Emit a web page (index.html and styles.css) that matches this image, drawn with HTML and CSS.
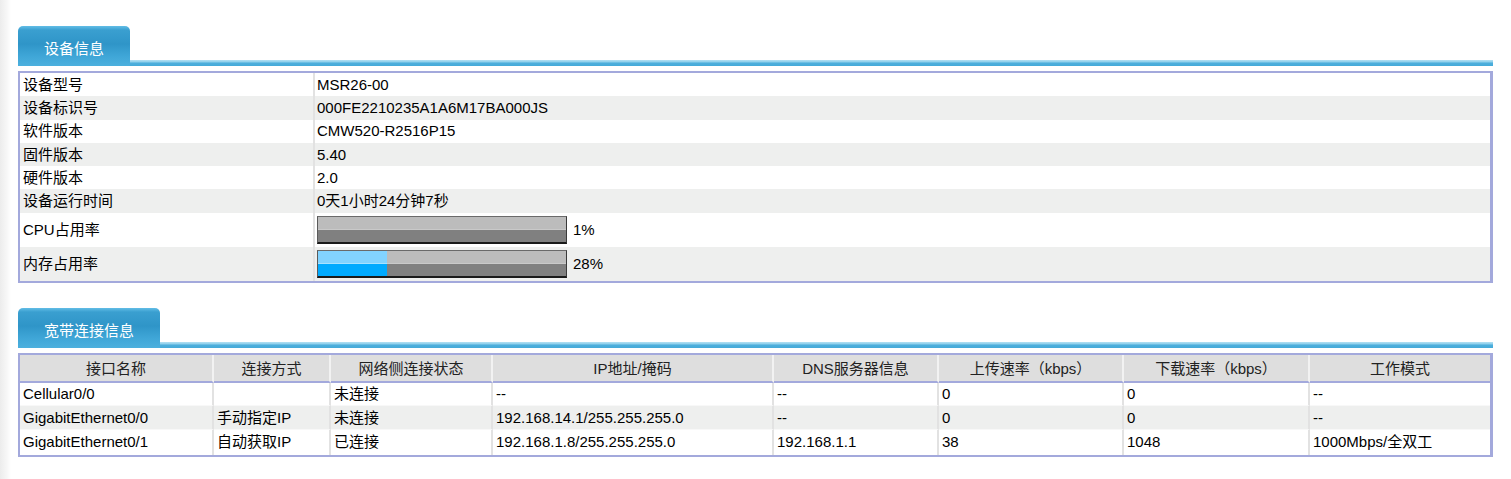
FILE: index.html
```html
<!DOCTYPE html>
<html lang="zh-CN">

<head>
    <meta charset="UTF-8">
    <meta name="viewport" content="width=device-width, initial-scale=1.0">
    <title>设备概览</title>
    <link rel="stylesheet" href="styles.css">
</head>

<body>
    <div class="page">
        <div class="section">
            <div class="tab-bar">
                <div class="tab">设备信息</div>
                <div class="tab-line"></div>
            </div>
            <table class="info-table">
                <tr>
                    <td class="label">设备型号</td>
                    <td>MSR26-00</td>
                </tr>
                <tr class="alt">
                    <td class="label">设备标识号</td>
                    <td>000FE2210235A1A6M17BA000JS</td>
                </tr>
                <tr>
                    <td class="label">软件版本</td>
                    <td>CMW520-R2516P15</td>
                </tr>
                <tr class="alt">
                    <td class="label">固件版本</td>
                    <td>5.40</td>
                </tr>
                <tr>
                    <td class="label">硬件版本</td>
                    <td>2.0</td>
                </tr>
                <tr class="alt">
                    <td class="label">设备运行时间</td>
                    <td>0天1小时24分钟7秒</td>
                </tr>
                <tr class="bar-row">
                    <td class="label">CPU占用率</td>
                    <td>
                        <div class="usage">
                            <div class="bar"><div class="bar-fill" style="width: 0%"></div></div>
                            <span class="usage-text">1%</span>
                        </div>
                    </td>
                </tr>
                <tr class="bar-row alt">
                    <td class="label">内存占用率</td>
                    <td>
                        <div class="usage">
                            <div class="bar"><div class="bar-fill" style="width: 28%"></div></div>
                            <span class="usage-text">28%</span>
                        </div>
                    </td>
                </tr>
            </table>
        </div>

        <div class="section">
            <div class="tab-bar">
                <div class="tab tab-wide">宽带连接信息</div>
                <div class="tab-line"></div>
            </div>
            <table class="wan-table">
                <colgroup>
                    <col class="c-name">
                    <col class="c-type">
                    <col class="c-state">
                    <col class="c-ip">
                    <col class="c-dns">
                    <col class="c-up">
                    <col class="c-down">
                    <col class="c-mode">
                </colgroup>
                <thead>
                    <tr>
                        <th>接口名称</th>
                        <th>连接方式</th>
                        <th>网络侧连接状态</th>
                        <th>IP地址/掩码</th>
                        <th>DNS服务器信息</th>
                        <th>上传速率（kbps）</th>
                        <th>下载速率（kbps）</th>
                        <th class="last">工作模式</th>
                    </tr>
                </thead>
                <tbody>
                    <tr>
                        <td>Cellular0/0</td>
                        <td></td>
                        <td>未连接</td>
                        <td>--</td>
                        <td>--</td>
                        <td>0</td>
                        <td>0</td>
                        <td class="last">--</td>
                    </tr>
                    <tr class="alt">
                        <td>GigabitEthernet0/0</td>
                        <td>手动指定IP</td>
                        <td>未连接</td>
                        <td>192.168.14.1/255.255.255.0</td>
                        <td>--</td>
                        <td>0</td>
                        <td>0</td>
                        <td class="last">--</td>
                    </tr>
                    <tr>
                        <td>GigabitEthernet0/1</td>
                        <td>自动获取IP</td>
                        <td>已连接</td>
                        <td>192.168.1.8/255.255.255.0</td>
                        <td>192.168.1.1</td>
                        <td>38</td>
                        <td>1048</td>
                        <td class="last">1000Mbps/全双工</td>
                    </tr>
                </tbody>
            </table>
        </div>
    </div>
</body>

</html>
```

FILE: styles.css
```css
html,
body {
    margin: 0;
    padding: 0;
}

body {
    font-family: "Liberation Sans", Arial, "Noto Sans CJK SC", sans-serif;
    font-size: 15px;
    color: #000;
    background: linear-gradient(to right, #ececec 0, #f7f7f7 7px, #fff 11px) no-repeat;
    background-color: #fff;
    min-height: 479px;
}

.page {
    padding: 26px 18px 0 18px;
}

.section {
    margin-bottom: 25px;
}

/* tab header */
.tab-bar {
    display: flex;
    align-items: flex-end;
    height: 40px;
    margin-bottom: 5px;
}

.tab {
    width: 112px;
    height: 40px;
    box-sizing: border-box;
    padding-top: 12px;
    line-height: 22px;
    text-align: center;
    color: #fff;
    font-size: 15px;
    border-radius: 5px 5px 0 0;
    background: linear-gradient(to bottom, #62bde6 0, #3a9fd0 4px, #2f95c8 45%, #3fa6d7 75%, #4cb0de 100%);
}

.tab-wide {
    width: 142px;
}

.tab-line {
    flex: 1;
    height: 6px;
    background: linear-gradient(to bottom, #b4e0f2 0, #8ccfec 33%, #4eafdc 50%, #44aad9 100%);
}

/* device info table */
.info-table {
    width: 100%;
    border-collapse: separate;
    border-spacing: 0;
    border: 2px solid #a3a9dc;
    border-right-width: 3px;
}

.info-table td {
    height: 23.3px;
    padding: 0 0 0 2px;
    box-sizing: border-box;
    line-height: 22px;
    white-space: nowrap;
}

.info-table td.label {
    width: 295px;
    padding-left: 3px;
    border-right: 2px solid #e2e2e2;
}

.info-table tr.alt td {
    background-color: #eeefee;
}

.info-table tr.bar-row td {
    height: 34px;
}

.usage {
    display: flex;
    align-items: center;
}

.bar {
    width: 250px;
    height: 28px;
    box-sizing: border-box;
    border-top: 1px solid #6a6a6a;
    border-left: 1px solid #5a5a5a;
    border-right: 1px solid #3a3a3a;
    border-bottom: 2px solid #1a1a1a;
    background: linear-gradient(to bottom, #bcbcbc 0, #bcbcbc 48%, #c9c9c9 48%, #c9c9c9 52%, #808080 52%, #808080 100%);
}

.bar-fill {
    height: 100%;
    background: linear-gradient(to bottom, #82d3ff 0, #82d3ff 48%, #a8e2ff 48%, #a8e2ff 52%, #00aaff 52%, #00aaff 100%);
}

.usage-text {
    margin-left: 6px;
}

/* wan table */
.wan-table {
    width: 100%;
    table-layout: fixed;
    border-collapse: separate;
    border-spacing: 0;
    border: 2px solid #a3a9dc;
    border-right-width: 3px;
}

.c-name { width: 194px; }
.c-type { width: 117px; }
.c-state { width: 162px; }
.c-ip { width: 281px; }
.c-dns { width: 165px; }
.c-up { width: 185px; }
.c-down { width: 186px; }
.c-mode { width: auto; }

.wan-table th {
    height: 28px;
    padding: 0;
    font-weight: normal;
    color: #222;
    background-color: #dedede;
    border-right: 2px solid #f2f2f2;
    border-bottom: 2px solid #a3a9dc;
    text-align: center;
    box-sizing: border-box;
}

.wan-table td {
    height: 23.5px;
    padding: 0 0 0 3px;
    box-sizing: border-box;
    line-height: 22px;
    white-space: nowrap;
    border-right: 2px solid #e2e2e2;
    border-bottom: 1px solid #f8f8f8;
}

.wan-table tbody tr:last-child td {
    height: 25px;
    border-bottom: none;
}

.wan-table .last {
    border-right: none;
}

.wan-table tr.alt td {
    background-color: #eeefee;
}
```
